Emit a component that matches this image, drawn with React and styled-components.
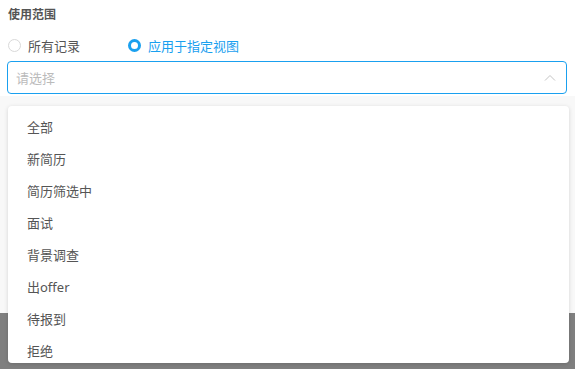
import styled, { createGlobalStyle } from "styled-components";

const GlobalStyle = createGlobalStyle`
  html, body {
    margin: 0;
    padding: 0;
    background: #ffffff;
    font-family: "Noto Sans", "Noto Sans CJK SC", sans-serif;
  }
`;

const BLUE = "#1aa0ef";

const options = [
  "全部",
  "新简历",
  "简历筛选中",
  "面试",
  "背景调查",
  "出offer",
  "待报到",
  "拒绝",
];

export default function App() {
  return (
    <Page>
      <GlobalStyle />
      <Form>
        <Label>使用范围</Label>
        <RadioGroup>
          <Radio>
            <Dot />
            <span>所有记录</span>
          </Radio>
          <Radio checked>
            <Dot checked />
            <span>应用于指定视图</span>
          </Radio>
        </RadioGroup>
        <Select>
          <Placeholder>请选择</Placeholder>
          <svg width="12" height="8" viewBox="0 0 12 8">
            <path d="M1 6.5 L6 1.5 L11 6.5" fill="none" stroke="#c4c4c4" strokeWidth="1" />
          </svg>
        </Select>
      </Form>
      <Backdrop />
      <Mask />
      <Dropdown>
        {options.map((o) => (
          <Option key={o}>{o}</Option>
        ))}
      </Dropdown>
    </Page>
  );
}

const Page = styled.div`
  position: relative;
  width: 575px;
  height: 369px;
  overflow: hidden;
  display: flex;
  flex-direction: column;
`;

const Form = styled.div`
  background: #ffffff;
  padding: 5px 8px 0 7px;
  height: 91px;
  display: flex;
  flex-direction: column;
`;

const Label = styled.div`
  font-size: 12px;
  font-weight: 700;
  color: #555555;
  line-height: 20px;
  padding-left: 1px;
`;

const RadioGroup = styled.div`
  display: flex;
  gap: 48px;
  margin-top: 10px;
  height: 20px;
  align-items: center;
  padding-left: 1px;
`;

const Radio = styled.label`
  display: flex;
  align-items: center;
  gap: 7px;
  font-size: 13px;
  color: ${(p) => (p.checked ? BLUE : "#555555")};
`;

const Dot = styled.span`
  box-sizing: border-box;
  width: 13px;
  height: 13px;
  border-radius: 50%;
  border: ${(p) => (p.checked ? `3.5px solid ${BLUE}` : "1px solid #d9d9d9")};
  background: #ffffff;
`;

const Select = styled.div`
  box-sizing: border-box;
  margin-top: 6px;
  height: 33px;
  border: 1px solid ${BLUE};
  border-radius: 4px;
  display: flex;
  align-items: center;
  justify-content: space-between;
  padding: 0 10px 0 8px;
`;

const Placeholder = styled.span`
  font-size: 13px;
  color: #bbbbbb;
`;

const Backdrop = styled.div`
  height: 217px;
  background: #f8f8f8;
`;

const Mask = styled.div`
  flex: 1;
  background: #7f7f7f;
`;

const Dropdown = styled.div`
  position: absolute;
  left: 8px;
  top: 106px;
  width: 561px;
  height: 257px;
  box-sizing: border-box;
  padding-top: 5px;
  background: #ffffff;
  border-radius: 4px;
  box-shadow: 0 1px 4px rgba(0, 0, 0, 0.15);
  overflow: hidden;
`;

const Option = styled.div`
  height: 32px;
  line-height: 32px;
  padding-left: 19px;
  font-size: 13px;
  color: #555555;
`;
